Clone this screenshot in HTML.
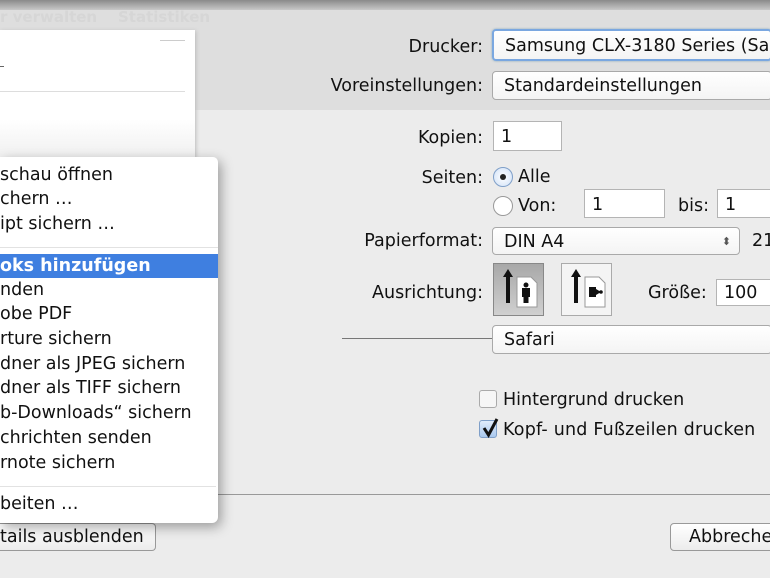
<!DOCTYPE html>
<html><head><meta charset="utf-8"><style>
html,body{margin:0;width:770px;height:578px;overflow:hidden}
#r{position:relative;width:770px;height:578px;overflow:hidden;background:#ececec;font-family:"DejaVu Sans","Liberation Sans",sans-serif;font-size:17.5px;color:#111}
.a{position:absolute;white-space:nowrap}
.lbl{position:absolute;right:287px;white-space:nowrap;text-align:right}
.pop{position:absolute;background:linear-gradient(#fff,#f4f4f4);border:1px solid #a9a9a9;border-radius:4px;box-sizing:border-box;padding-left:11px;white-space:nowrap;overflow:hidden}
.fld{position:absolute;background:#fff;border:1px solid #b4b4b4;box-sizing:border-box;padding-left:7px;white-space:nowrap}
.mi{position:absolute;left:0;width:218px;height:24px;line-height:24px;white-space:nowrap;overflow:hidden}
</style></head><body><div id="r">
<div class="a" style="left:0;top:0;width:770px;height:10px;background:linear-gradient(#8a8a8a,#c8c8c8)"></div>
<div class="a" style="left:0;top:10px;width:770px;height:100px;background:#dedede"></div>
<div class="a" style="left:0;top:8px;color:#d6d6d6;font-size:15px;font-weight:bold">r verwalten &nbsp;&nbsp; Statistiken</div>
<div class="a" style="left:0;top:30px;width:195px;height:128px;background:linear-gradient(#fff 70%,#f0f0f0);box-shadow:1px 1px 4px #bbb"></div>
<div class="a" style="left:0;top:91px;width:185px;height:1px;background:#ddd"></div>
<div class="a" style="left:0;top:66px;width:4px;height:1px;background:#666"></div>
<div class="a" style="left:160px;top:40px;width:25px;height:1px;background:#ccc"></div>

<div class="lbl" style="top:37px">Drucker:</div>
<div class="pop" style="left:492px;top:29px;width:280px;height:32px;line-height:30px;border:2px solid #7aa7e0;box-shadow:0 0 2px #8ab">Samsung CLX-3180 Series (Samsung)</div>
<div class="lbl" style="top:76px">Voreinstellungen:</div>
<div class="pop" style="left:492px;top:71px;width:280px;height:29px;line-height:28px">Standardeinstellungen</div>
<div class="lbl" style="top:128px">Kopien:</div>
<div class="fld" style="left:493px;top:121px;width:69px;height:30px;line-height:30px">1</div>
<div class="lbl" style="top:168px">Seiten:</div>
<div class="a" style="left:493px;top:167px;width:20px;height:20px;border-radius:50%;background:radial-gradient(#fff,#cfe0f7);border:1px solid #7f9fc8;box-sizing:border-box"></div>
<div class="a" style="left:500px;top:174px;width:6px;height:6px;border-radius:50%;background:#222"></div>
<div class="a" style="left:518px;top:167px">Alle</div>
<div class="a" style="left:493px;top:196px;width:20px;height:20px;border-radius:50%;background:#fff;border:1px solid #999;box-sizing:border-box"></div>
<div class="a" style="left:518px;top:196px">Von:</div>
<div class="fld" style="left:584px;top:189px;width:81px;height:29px;line-height:30px">1</div>
<div class="a" style="left:678px;top:196px">bis:</div>
<div class="fld" style="left:717px;top:189px;width:55px;height:29px;line-height:30px">1</div>
<div class="lbl" style="top:231px">Papierformat:</div>
<div class="pop" style="left:492px;top:227px;width:248px;height:28px;line-height:28px">DIN A4<span style="position:absolute;right:8px;top:0;font-size:11px;color:#555">⬍</span></div>
<div class="a" style="left:752px;top:231px">21</div>
<div class="lbl" style="top:283px">Ausrichtung:</div>
<div class="a" style="left:493px;top:263px;width:51px;height:53px;background:linear-gradient(#a8a8a8,#d0d0d0);border:1px solid #888;box-sizing:border-box"></div>
<div class="a" style="left:561px;top:263px;width:51px;height:53px;background:#f4f4f4;border:1px solid #aaa;box-sizing:border-box"></div>
<svg class="a" style="left:493px;top:263px" width="120" height="53">
<path d="M10 14 L15 6 L20 14 Z M13 14 H17 V40 H13Z" fill="#111"/>
<path d="M24 14 H38 L44 20 V44 H24Z" fill="#fff" stroke="#999"/>
<circle cx="33" cy="22" r="2.5" fill="#111"/><rect x="29" y="25" width="8" height="9" fill="#111"/><rect x="30.5" y="34" width="5" height="6" fill="#111"/>
<path d="M78 14 L83 6 L88 14 Z M81 14 H85 V40 H81Z" fill="#111"/>
<path d="M92 14 H106 L112 20 V44 H92Z" fill="#fff" stroke="#999"/>
<path d="M96 24 H103 V34 H96Z M103 26 L108 29 L103 32Z" fill="#111"/><circle cx="108" cy="29" r="1.8" fill="#111"/>
</svg>
<div class="a" style="left:648px;top:283px">Größe:</div>
<div class="fld" style="left:716px;top:279px;width:56px;height:27px;line-height:27px">100</div>
<div class="a" style="left:342px;top:338px;width:150px;height:1px;background:#777"></div>
<div class="pop" style="left:492px;top:325px;width:280px;height:29px;line-height:28px">Safari</div>
<div class="a" style="left:479px;top:390px;width:18px;height:18px;border:1px solid #aaa;border-radius:3px;background:#f6f6f6;box-sizing:border-box"></div>
<div class="a" style="left:503px;top:390px">Hintergrund drucken</div>
<div class="a" style="left:479px;top:420px;width:18px;height:18px;border:1px solid #7f9fc8;border-radius:3px;background:linear-gradient(#e0ecfb,#a9c8ee);box-sizing:border-box"></div>
<svg class="a" style="left:480px;top:416px" width="22" height="24"><path d="M4 12 L8.5 19 L17 3" stroke="#111" stroke-width="3" fill="none"/></svg>
<div class="a" style="left:503px;top:420px;letter-spacing:.2px">Kopf- und Fußzeilen drucken</div>
<div class="a" style="left:218px;top:494px;width:552px;height:1px;background:#999"></div>
<div class="a" style="left:670px;top:523px;width:102px;height:28px;background:linear-gradient(#fff,#ececec);border:1px solid #999;border-radius:4px 0 0 4px;box-sizing:border-box;line-height:26px;padding-left:18px;overflow:hidden">Abbrechen</div>
<div class="a" style="left:0;top:523px;width:156px;height:28px;background:linear-gradient(#fff,#ececec);border:1px solid #999;border-left:none;border-radius:0 4px 4px 0;box-sizing:border-box;line-height:26px;padding-left:0">tails ausblenden</div>

<div class="a" style="left:0;top:157px;width:218px;height:366px;background:#fff;border-radius:0 5px 6px 0;box-shadow:3px 4px 12px rgba(0,0,0,.35)"></div>
<div class="mi" style="top:163px">schau öffnen</div>
<div class="mi" style="top:187px">chern …</div>
<div class="mi" style="top:212px">ipt sichern …</div>
<div class="a" style="left:0;top:247px;width:218px;height:1px;background:#e2e2e2"></div>
<div class="mi" style="top:254px;background:#3f7fe0;color:#fff;font-weight:bold">oks hinzufügen</div>
<div class="mi" style="top:278px">nden</div>
<div class="mi" style="top:302px">obe PDF</div>
<div class="mi" style="top:327px">rture sichern</div>
<div class="mi" style="top:352px">dner als JPEG sichern</div>
<div class="mi" style="top:376px">dner als TIFF sichern</div>
<div class="mi" style="top:401px">b-Downloads“ sichern</div>
<div class="mi" style="top:426px">chrichten senden</div>
<div class="mi" style="top:451px">rnote sichern</div>
<div class="a" style="left:0;top:486px;width:216px;height:1px;background:#e2e2e2"></div>
<div class="mi" style="top:492px">beiten …</div>
</div></body></html>
